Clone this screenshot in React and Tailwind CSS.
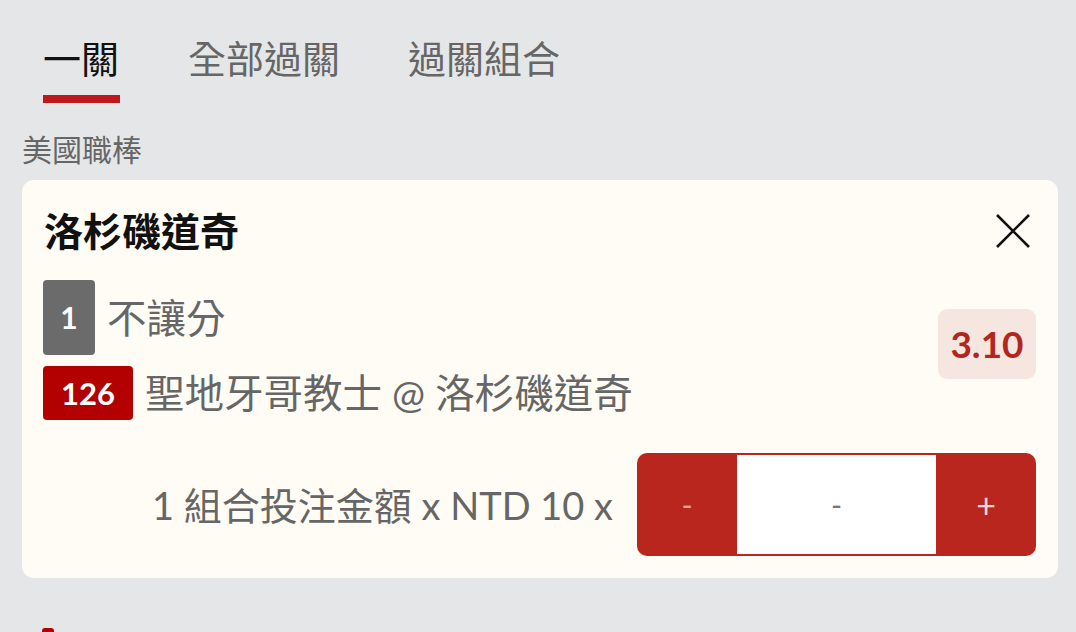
import React from "react";

const font = { fontFamily: '"Lato", "Noto Sans CJK TC", sans-serif' };

const App = () => {
  return (
    <div
      className="w-[1076px] h-[632px] overflow-hidden bg-[#e5e6e8] text-[#666]"
      style={font}
    >
      {/* tabs */}
      <div className="flex gap-[68px] pl-[43px] pt-[39px]">
        <div className="flex flex-col">
          <span className="text-[38px] leading-[38px] text-[#111]">一關</span>
          <div className="mt-[18px] h-[8px] w-[77px] bg-[#c0171c]" />
        </div>
        <span className="text-[38px] leading-[38px]">全部過關</span>
        <span className="text-[38px] leading-[38px]">過關組合</span>
      </div>

      <div className="pl-[22px] pt-[31px] text-[30px] leading-[30px]">美國職棒</div>

      {/* bet card */}
      <div className="ml-[22px] mr-[18px] mt-[16px] rounded-[12px] bg-[#fefcf4] pl-[21px] pr-[22px] pt-[25px] pb-[22px]">
        <div className="flex h-[52px] items-center justify-between">
          <span className="pl-[1px] text-[39px] font-bold leading-[39px] text-[#111]">
            洛杉磯道奇
          </span>
          <svg width="36" height="36" viewBox="0 0 36 36" className="mr-[5px]">
            <path d="M2 2 L34 34 M34 2 L2 34" stroke="#111" strokeWidth="2.6" />
          </svg>
        </div>

        <div className="mt-[23px] flex items-center justify-between">
          <div className="flex flex-col gap-[11px]">
            <div className="flex items-center gap-[12px]">
              <div className="flex h-[75px] w-[52px] items-center justify-center rounded-[4px] bg-[#6b6b6b] text-[30px] font-bold text-white">
                1
              </div>
              <span className="text-[39.5px] leading-[40px]">不讓分</span>
            </div>
            <div className="flex items-center gap-[12px]">
              <div className="flex h-[54px] w-[90px] items-center justify-center rounded-[4px] bg-[#b30000] text-[31px] font-bold text-white">
                126
              </div>
              <span className="text-[39.5px] leading-[40px]">聖地牙哥教士 @ 洛杉磯道奇</span>
            </div>
          </div>
          <div className="mb-[12px] flex h-[70px] w-[98px] items-center justify-center rounded-[9px] bg-[#f6e6e0] text-[37px] font-bold text-[#b3261e]">
            3.10
          </div>
        </div>

        <div className="mt-[33px] flex items-center justify-end gap-[24px]">
          <span className="text-[38px] leading-[38px]">1 組合投注金額 x NTD 10 x</span>
          <div className="flex h-[103px] w-[399px] overflow-hidden rounded-[10px] bg-[#b8261e]">
            <div className="flex w-[100px] items-center justify-center text-[30px] text-[#e8a59c]">
              -
            </div>
            <div className="flex flex-1 items-center justify-center border-y-2 border-[#b8261e] bg-white text-[30px] text-[#777]">
              -
            </div>
            <div className="flex w-[100px] items-center justify-center text-[34px] text-[#f8dcd6]">
              +
            </div>
          </div>
        </div>
      </div>

      <div className="ml-[42px] mt-[50px] h-[20px] w-[12px] rounded-[3px] bg-[#b30000]" />
    </div>
  );
};

export default App;
